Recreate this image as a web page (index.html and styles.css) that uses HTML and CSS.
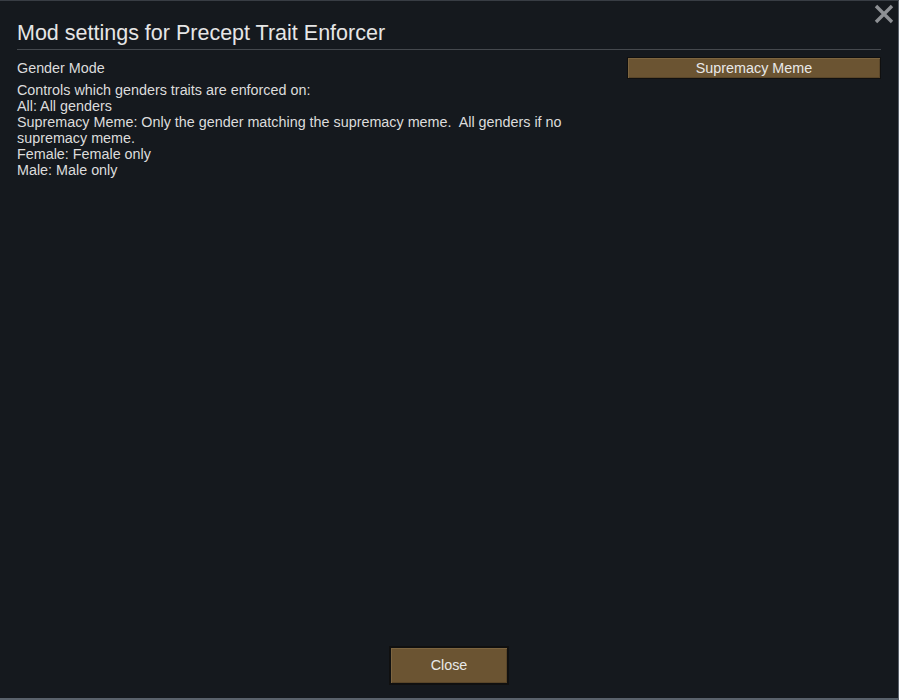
FILE: index.html
```html
<!DOCTYPE html>
<html>
<head>
<meta charset="utf-8">
<link rel="stylesheet" href="styles.css">
</head>
<body>
<div class="window">
  <button class="close-x" aria-label="Close">
    <svg width="20" height="20" viewBox="0 0 20 20"><path d="M2 2 L18 18 M18 2 L2 18" stroke="#8d9094" stroke-width="3.4" stroke-linecap="butt" fill="none"/></svg>
  </button>
  <div class="content">
    <h1 class="title">Mod settings for Precept Trait Enforcer</h1>
    <div class="rule"></div>
    <div class="setting">
      <div class="setting-text">
        <div class="label">Gender Mode</div>
        <div class="desc">Controls which genders traits are enforced on:<br>All: All genders<br>Supremacy Meme: Only the gender matching the supremacy meme.&nbsp; All genders if no supremacy meme.<br>Female: Female only<br>Male: Male only</div>
      </div>
      <div class="btn dropdown">Supremacy Meme</div>
    </div>
  </div>
  <div class="footer">
    <div class="btn close-btn">Close</div>
  </div>
</div>
</body>
</html>
```
FILE: styles.css
```css
html, body {
  margin: 0;
  padding: 0;
  background: #15191e;
}
body {
  font-family: "Liberation Sans", Arial, sans-serif;
  color: #dcdcdc;
}
.window {
  position: relative;
  box-sizing: border-box;
  width: 899px;
  height: 700px;
  background: #15191e;
  border-top: 1px solid #383d44;
  border-right: 1px solid #5a626c;
  border-bottom: 2px solid #5a626c;
  display: flex;
  flex-direction: column;
}
.close-x {
  position: absolute;
  top: 3px;
  right: 4px;
  width: 20px;
  height: 20px;
  padding: 0;
  border: 0;
  background: none;
}
.close-x svg { display: block; }
.content {
  flex: 1;
  padding: 20px 17px 0 17px;
}
.title {
  margin: 0;
  font-weight: normal;
  font-size: 21.5px;
  line-height: 24px;
  color: #e6e6e6;
}
.rule {
  margin-top: 4px;
  height: 1px;
  background: #45494e;
}
.setting {
  display: flex;
  justify-content: space-between;
  align-items: flex-start;
  margin-top: 7px;
}
.setting-text {
  width: 590px;
  font-size: 14.35px;
  line-height: 16px;
}
.label {
  margin-top: 3px;
}
.desc {
  margin-top: 6px;
}
.btn {
  box-sizing: border-box;
  background: #6b5432;
  border: 1px solid #101010;
  box-shadow: inset 1px 1px 0 #7d6540, inset -1px -1px 0 #5a4629;
  color: #e8e8e8;
  font-size: 14.35px;
  text-align: center;
}
.dropdown {
  width: 254px;
  height: 22px;
  line-height: 20px;
}
.footer {
  display: flex;
  justify-content: center;
  padding-bottom: 13px;
}
.close-btn {
  width: 120px;
  height: 39px;
  border-width: 2px;
  line-height: 35px;
}
```
